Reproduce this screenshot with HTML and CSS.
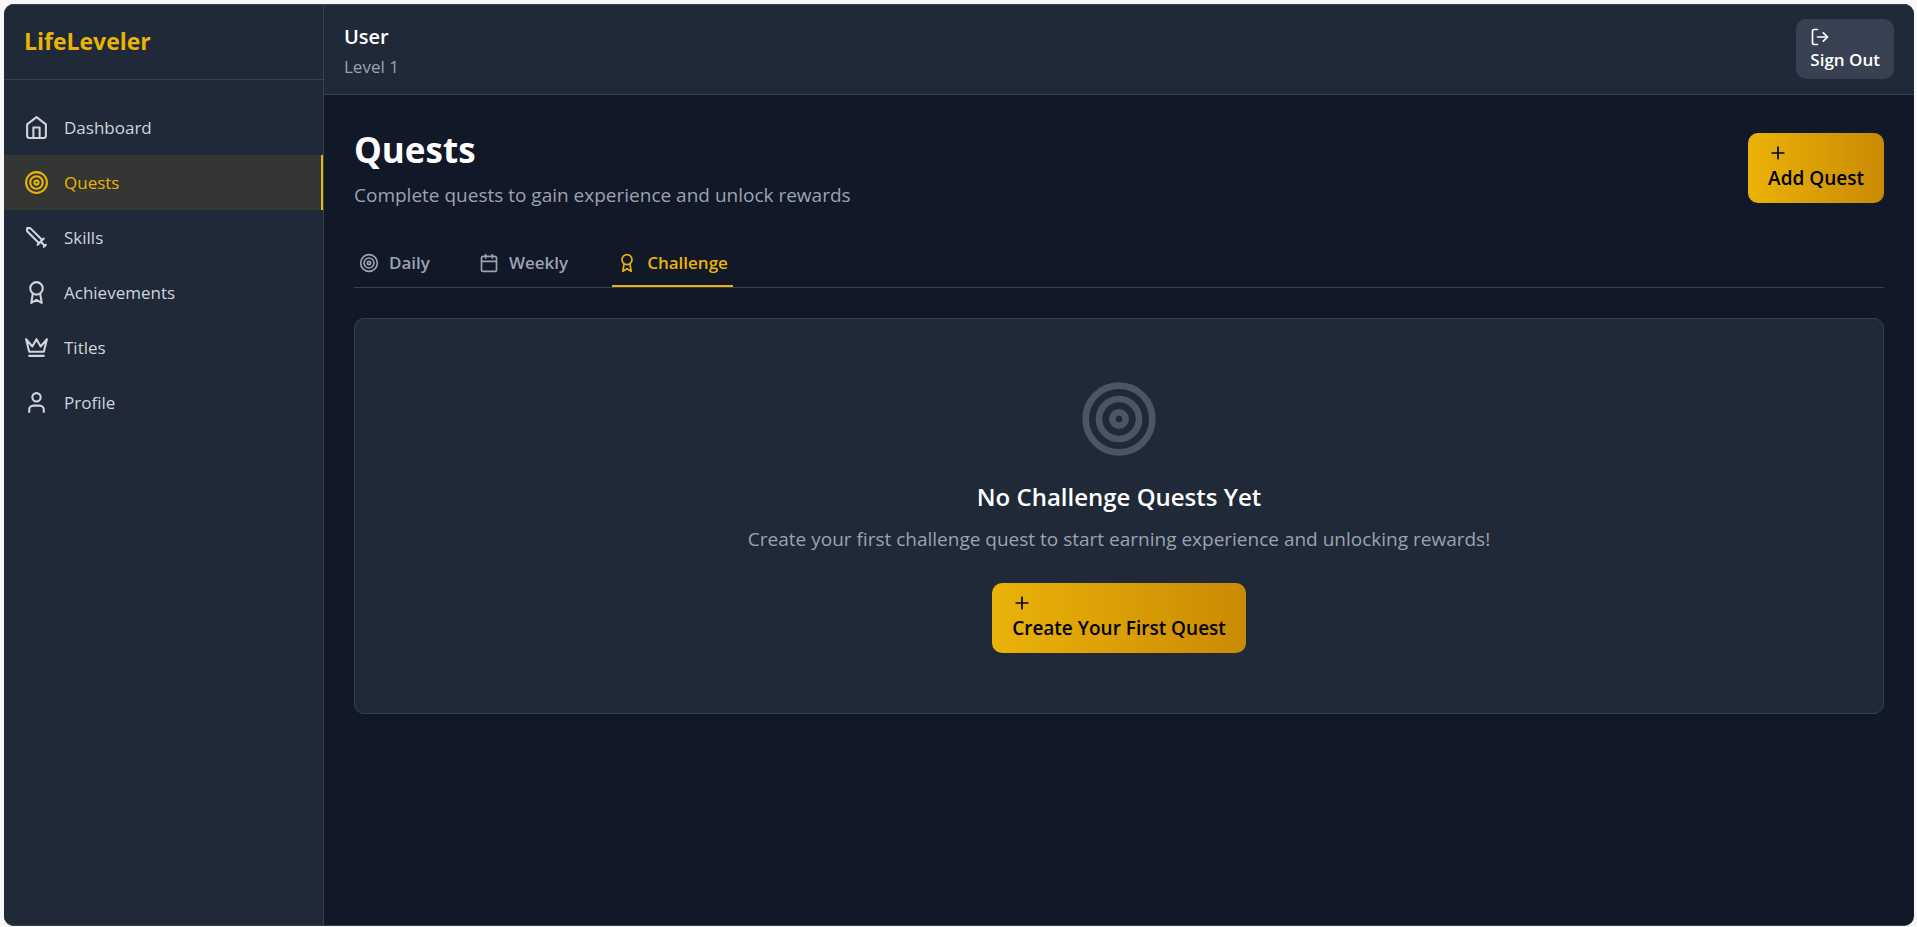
FILE: index.html
```html
<!DOCTYPE html>
<html lang="en">
<head>
  <meta charset="UTF-8"/>
  <meta name="viewport" content="width=device-width, initial-scale=1.0"/>
  <title>LifeLeveler</title>
  <link rel="stylesheet" href="styles.css">
</head>
<body>

<!-- shared icons -->
<svg class="sprite" aria-hidden="true">
  <symbol id="i-home" viewBox="0 0 24 24"><path d="m3 9 9-7 9 7v11a2 2 0 0 1-2 2H5a2 2 0 0 1-2-2z"/><path d="M9 22V12h6v10"/></symbol>
  <symbol id="i-target" viewBox="0 0 24 24"><circle cx="12" cy="12" r="10"/><circle cx="12" cy="12" r="6"/><circle cx="12" cy="12" r="2"/></symbol>
  <symbol id="i-sword" viewBox="0 0 24 24"><path d="M14.5 17.5 3 6V3h3l11.500 11.500"/><path d="m13 19 6-6"/><path d="m16 16 4 4"/><path d="m19 21 2-2"/></symbol>
  <symbol id="i-award" viewBox="0 0 24 24"><circle cx="12" cy="8" r="6"/><path d="M15.477 12.890 17 22l-5-3-5 3 1.523-9.110"/></symbol>
  <symbol id="i-crown" viewBox="0 0 24 24"><path d="m2 4 3 12h14l3-12-6 7-4-7-4 7-6-7z"/><path d="M5 20h14"/></symbol>
  <symbol id="i-user" viewBox="0 0 24 24"><path d="M19 21v-2a4 4 0 0 0-4-4H9a4 4 0 0 0-4 4v2"/><circle cx="12" cy="7" r="4"/></symbol>
  <symbol id="i-calendar" viewBox="0 0 24 24"><rect x="3" y="4" width="18" height="18" rx="2"/><path d="M16 2v4M8 2v4M3 10h18"/></symbol>
  <symbol id="i-logout" viewBox="0 0 24 24"><path d="M9 21H5a2 2 0 0 1-2-2V5a2 2 0 0 1 2-2h4"/><path d="m16 17 5-5-5-5"/><path d="M21 12H9"/></symbol>
  <symbol id="i-plus" viewBox="0 0 24 24"><path d="M5 12h14M12 5v14"/></symbol>
</svg>

<div class="app">
  <aside class="sidebar">
    <div class="brand">LifeLeveler</div>
    <nav class="nav">
      <a href="#dashboard"><svg class="icon"><use href="#i-home"/></svg>Dashboard</a>
      <a href="#quests" class="active"><svg class="icon"><use href="#i-target"/></svg>Quests</a>
      <a href="#skills"><svg class="icon"><use href="#i-sword"/></svg>Skills</a>
      <a href="#achievements"><svg class="icon"><use href="#i-award"/></svg>Achievements</a>
      <a href="#titles"><svg class="icon"><use href="#i-crown"/></svg>Titles</a>
      <a href="#profile"><svg class="icon"><use href="#i-user"/></svg>Profile</a>
    </nav>
  </aside>

  <div class="main">
    <header class="topbar">
      <div>
        <h2>User</h2>
        <p>Level 1</p>
      </div>
      <button class="btn-signout"><svg class="icon"><use href="#i-logout"/></svg>Sign Out</button>
    </header>

    <main class="content">
      <div class="page-head">
        <div>
          <h1>Quests</h1>
          <p>Complete quests to gain experience and unlock rewards</p>
        </div>
        <button class="btn-gold"><svg class="icon"><use href="#i-plus"/></svg>Add Quest</button>
      </div>

      <div class="tabs">
        <button class="tab"><svg class="icon"><use href="#i-target"/></svg>Daily</button>
        <button class="tab"><svg class="icon"><use href="#i-calendar"/></svg>Weekly</button>
        <button class="tab active"><svg class="icon"><use href="#i-award"/></svg>Challenge</button>
      </div>

      <section class="empty">
        <svg class="icon"><use href="#i-target"/></svg>
        <h3>No Challenge Quests Yet</h3>
        <p>Create your first challenge quest to start earning experience and unlocking rewards!</p>
        <button class="btn-gold"><svg class="icon"><use href="#i-plus"/></svg>Create Your First Quest</button>
      </section>
    </main>
  </div>
</div>

</body>
</html>
```

FILE: styles.css
```css
*,*::before,*::after{box-sizing:border-box;margin:0;padding:0;}
body{min-height:100vh;display:flex;padding:4px 3px 1px 4px;background:#f7f7f7;color:#fff;font-family:"Segoe UI","Open Sans",sans-serif;font-size:17px;line-height:25px;}
button{font:inherit;font-weight:600;border:none;cursor:pointer;text-align:left;}
a{text-decoration:none;}
.sprite{position:absolute;width:0;height:0;}
.icon{display:block;flex:none;width:20px;height:20px;fill:none;stroke:currentColor;stroke-width:2;stroke-linecap:round;stroke-linejoin:round;}

.app{position:relative;flex:1;display:flex;background:#111827;border-radius:10px;overflow:hidden;}
.app::after{content:"";position:absolute;inset:0;border:solid #374151;border-width:1px 0;border-radius:10px;pointer-events:none;}

/* sidebar */
.sidebar{flex:none;width:320px;background:#1f2937;border-right:1px solid #374151;}
.brand{padding:20px;border-bottom:1px solid #374151;color:#eab308;font-size:23px;font-weight:700;line-height:35px;}
.nav{padding:20px 0;}
.nav a{display:flex;align-items:center;gap:15px;padding:15px 20px;color:#d1d5db;}
.nav a.active{background:rgba(234,179,8,0.1);color:#eab308;border-right:2px solid #eab308;}
.nav .icon{width:25px;height:25px;}

/* top bar */
.main{flex:1;min-width:0;}
.topbar{display:flex;justify-content:space-between;align-items:center;padding:15px 20px;background:#1f2937;border-bottom:1px solid #374151;}
.topbar h2{font-size:20px;font-weight:600;line-height:35px;}
.topbar p{color:#9ca3af;}
.btn-signout{padding:8px 14px 7px;border-radius:10px;background:#374151;color:#fff;}

/* quests page */
.content{padding:30px;}
.page-head{display:flex;justify-content:space-between;align-items:center;margin-bottom:30px;}
.page-head h1{font-size:35px;font-weight:700;line-height:50px;margin-bottom:5px;}
.page-head p,.empty p{color:#9ca3af;font-size:19px;line-height:30px;}
.btn-gold{padding:10px 20px;border-radius:10px;background:linear-gradient(to right,#eab308,#ca8a04);color:#000;font-size:19px;line-height:30px;}

.tabs{display:flex;gap:39px;margin-bottom:30px;border-bottom:1px solid #374151;}
.tab{display:flex;align-items:center;gap:10px;padding:10px 5px;background:none;border-bottom:2px solid transparent;color:#9ca3af;}
.tab.active{color:#eab308;border-color:#eab308;}

.empty{display:flex;flex-direction:column;align-items:center;padding:60px;background:#1f2937;border:1px solid #374151;border-radius:10px;text-align:center;}
.empty > .icon{width:80px;height:80px;margin-bottom:20px;color:#4b5563;}
.empty h3{font-size:24px;font-weight:600;line-height:35px;margin-bottom:10px;}
.empty p{margin-bottom:29px;}
```
